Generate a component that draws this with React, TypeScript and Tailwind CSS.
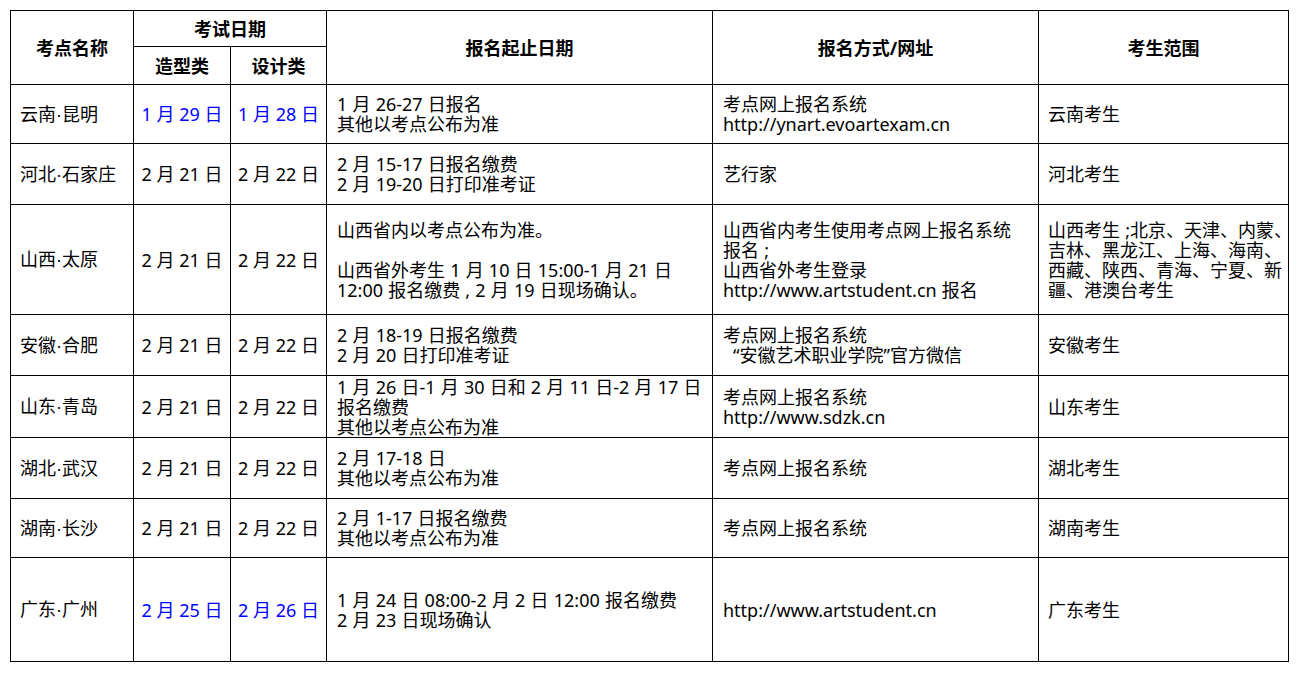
const FONT = { fontFamily: '"Noto Sans", "Noto Sans CJK SC", sans-serif' };

type Row = {
  name: [string, string];
  a: string;
  b: string;
  blue?: boolean;
  period: string[];
  way: string[];
  scope: string[];
  h: string;
};

const rows: Row[] = [
  {
    name: ["云南", "昆明"],
    a: "1 月 29 日",
    b: "1 月 28 日",
    blue: true,
    period: ["1 月 26-27 日报名", "其他以考点公布为准"],
    way: ["考点网上报名系统", "http://ynart.evoartexam.cn"],
    scope: ["云南考生"],
    h: "h-[59px]",
  },
  {
    name: ["河北", "石家庄"],
    a: "2 月 21 日",
    b: "2 月 22 日",
    period: ["2 月 15-17 日报名缴费", "2 月 19-20 日打印准考证"],
    way: ["艺行家"],
    scope: ["河北考生"],
    h: "h-[61px]",
  },
  {
    name: ["山西", "太原"],
    a: "2 月 21 日",
    b: "2 月 22 日",
    period: ["山西省内以考点公布为准。", "\u00a0", "山西省外考生 1 月 10 日 15:00-1 月 21 日", "12:00 报名缴费 , 2 月 19 日现场确认。"],
    way: ["山西省内考生使用考点网上报名系统", "报名 ;", "山西省外考生登录", "http://www.artstudent.cn 报名"],
    scope: ["山西考生 ;北京、天津、内蒙、", "吉林、黑龙江、上海、海南、", "西藏、陕西、青海、宁夏、新", "疆、港澳台考生"],
    h: "h-[110px]",
  },
  {
    name: ["安徽", "合肥"],
    a: "2 月 21 日",
    b: "2 月 22 日",
    period: ["2 月 18-19 日报名缴费", "2 月 20 日打印准考证"],
    way: ["考点网上报名系统", "“安徽艺术职业学院”官方微信"],
    scope: ["安徽考生"],
    h: "h-[61px]",
  },
  {
    name: ["山东", "青岛"],
    a: "2 月 21 日",
    b: "2 月 22 日",
    period: ["1 月 26 日-1 月 30 日和 2 月 11 日-2 月 17 日", "报名缴费", "其他以考点公布为准"],
    way: ["考点网上报名系统", "http://www.sdzk.cn"],
    scope: ["山东考生"],
    h: "h-[62px]",
  },
  {
    name: ["湖北", "武汉"],
    a: "2 月 21 日",
    b: "2 月 22 日",
    period: ["2 月 17-18 日", "其他以考点公布为准"],
    way: ["考点网上报名系统"],
    scope: ["湖北考生"],
    h: "h-[61px]",
  },
  {
    name: ["湖南", "长沙"],
    a: "2 月 21 日",
    b: "2 月 22 日",
    period: ["2 月 1-17 日报名缴费", "其他以考点公布为准"],
    way: ["考点网上报名系统"],
    scope: ["湖南考生"],
    h: "h-[59px]",
  },
  {
    name: ["广东", "广州"],
    a: "2 月 25 日",
    b: "2 月 26 日",
    blue: true,
    period: ["1 月 24 日 08:00-2 月 2 日 12:00 报名缴费", "2 月 23 日现场确认"],
    way: ["http://www.artstudent.cn"],
    scope: ["广东考生"],
    h: "h-[104px]",
  },
];

function Lines({ items }: { items: string[] }) {
  return (
    <>
      {items.map((t, i) => (
        <div key={i} className={`whitespace-nowrap [word-spacing:0.5px] ${t.startsWith("“") ? "pl-[10px]" : ""}`}>
          {t}
        </div>
      ))}
    </>
  );
}

export default function App() {
  const td = "border border-black align-middle overflow-visible";
  const th = "border border-black align-middle text-center font-bold";
  return (
    <div className="min-h-screen bg-white p-[10px] text-[18px] leading-[20px] text-black" style={FONT}>
      <table className="w-[1278px] table-fixed border-collapse">
        <colgroup>
          <col className="w-[123px]" />
          <col className="w-[97px]" />
          <col className="w-[96px]" />
          <col className="w-[386px]" />
          <col className="w-[326px]" />
          <col className="w-[250px]" />
        </colgroup>
        <thead>
          <tr className="h-[36px]">
            <th rowSpan={2} className={th}>考点名称</th>
            <th colSpan={2} className={th}>考试日期</th>
            <th rowSpan={2} className={th}>报名起止日期</th>
            <th rowSpan={2} className={th}>报名方式/网址</th>
            <th rowSpan={2} className={th}>考生范围</th>
          </tr>
          <tr className="h-[38px]">
            <th className={th}>造型类</th>
            <th className={th}>设计类</th>
          </tr>
        </thead>
        <tbody>
          {rows.map((r) => (
            <tr key={r.name.join()} className={r.h}>
              <td className={`${td} whitespace-nowrap pl-[9px]`}>
                {r.name[0]}
                <span className="font-['Liberation_Sans']">·</span>
                {r.name[1]}
              </td>
              <td className={`${td} whitespace-nowrap text-center ${r.blue ? "text-[#0000ff]" : ""}`}>{r.a}</td>
              <td className={`${td} whitespace-nowrap text-center ${r.blue ? "text-[#0000ff]" : ""}`}>{r.b}</td>
              <td className={`${td} pl-[10px]`}>
                <Lines items={r.period} />
              </td>
              <td className={`${td} pl-[10px]`}>
                <Lines items={r.way} />
              </td>
              <td className={`${td} pl-[9px]`}>
                <Lines items={r.scope} />
              </td>
            </tr>
          ))}
        </tbody>
      </table>
    </div>
  );
}
